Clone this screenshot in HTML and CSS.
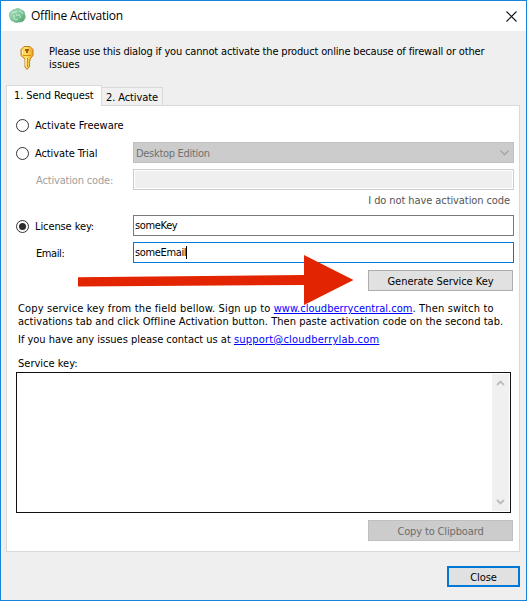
FILE: index.html
```html
<!DOCTYPE html>
<html lang="en">
<head>
<meta charset="utf-8">
<title>Offline Activation</title>
<link rel="stylesheet" href="styles.css">
</head>
<body>
<div class="window">
  <header class="titlebar">
    <svg class="app-icon" width="17" height="16" viewBox="0 0 17 16">
      <defs><linearGradient id="g" x1="0" y1="0" x2="1" y2="1"><stop offset="0" stop-color="#b5e4c5"/><stop offset=".55" stop-color="#7cc596"/><stop offset="1" stop-color="#4b9b68"/></linearGradient></defs>
      <path d="M3 3C4 1 6 2 7 1c2-1 4 0 5 1 2 0 4 2 3.500 4C17 8 16 11 15 12c-1 2-3 2-5 2-3 1-5 0-6-1-2 0-3-2-3-4C0 7 0 4 3 3z" fill="url(#g)" stroke="#6fb487" stroke-width=".7"/>
      <path d="M3 5.500C5 3 7 5 8 3.500M10 3c2 0 3 1 3.500 3M5 7v3c0 2 3 2 4 1M7 7h2c2 0 3 1 2 3" fill="none" stroke="#d2f0dc" stroke-width=".9"/>
    </svg>
    <h1 class="title">Offline Activation</h1>
    <svg class="close-icon" width="11" height="11" viewBox="0 0 11 11"><path d="M.5.500l10 10M10.500.500l-10 10" stroke="#111" stroke-width="1.100"/></svg>
  </header>
  <div class="intro">
    <svg class="key-icon" width="16" height="26" viewBox="0 0 16 26">
      <defs><linearGradient id="k" x1="0" y1="0" x2="1" y2="0"><stop offset="0" stop-color="#ffc928"/><stop offset=".4" stop-color="#ffe36a"/><stop offset="1" stop-color="#eea51c"/></linearGradient></defs>
      <path d="M5 1.500h6l3 3v6l-3 3.500v2l-1 1 1 2-1 1 1 1-3 3.500-2-2.500v-8L2 10.500v-6z" fill="url(#k)" stroke="#c27b1c" stroke-width="1"/>
      <path d="M6 5h4M7 7h2" stroke="#a85b12" stroke-width="2"/>
      <path d="M8.500 13v9M4 10.500h8" stroke="#d78c13" stroke-width="1"/>
      <path d="M3.500 5v4M7 14v7" stroke="#fff6bd" stroke-width="1"/>
    </svg>
    <p class="intro-text"><span class="intro-a">Please use this dialog if you cannot activate the product online because of firewall or other</span><br>issues</p>
  </div>
  <nav class="tabs">
    <div class="tab tab-active">1. Send Request</div>
    <div class="tab tab-idle">2. Activate</div>
  </nav>
  <main class="panel">
    <div class="form">
      <label class="row row-free"><i class="radio"></i><span class="free">Activate Freeware</span></label>
      <div class="row row-trial">
        <label class="label"><i class="radio"></i><span class="trial">Activate Trial</span></label>
        <div class="field select"><span class="desktop">Desktop Edition</span><svg width="9" height="6" viewBox="0 0 9 6"><path d="M.5.700l4 4 4-4" fill="none" stroke="#9c9c9c" stroke-width="1.100"/></svg></div>
      </div>
      <div class="row row-code"><span class="label indent disabled"><span class="code">Activation code:</span></span><div class="field locked"></div></div>
      <div class="no-code"><span class="nocode">I do not have activation code</span></div>
      <div class="row row-key">
        <label class="label"><i class="radio checked"></i><span class="license">License key:</span></label>
        <div class="field"><span class="value">someKey</span></div>
      </div>
      <div class="row row-email"><span class="label indent"><span class="email">Email:</span></span><div class="field focused"><span class="value">someEmail</span><i class="caret"></i></div></div>
    </div>
    <div class="actions"><div class="button"><span class="generate">Generate Service Key</span></div></div>
    <p class="help"><span class="help-first">Copy service key from the field bellow. Sign up to <a class="site">www.cloudberrycentral.com</a>. Then switch to</span><br><span class="help-second">activations tab and click Offline Activation button. Then paste activation code on the second tab.</span></p>
    <p class="help contact"><span class="help-contact">If you have any issues please contact us at <a class="mail">support@cloudberrylab.com</a></span></p>
    <div class="service-label"><span class="service">Service key:</span></div>
    <div class="textarea">
      <div class="scrollbar">
        <svg width="9" height="6" viewBox="0 0 9 6"><path d="M1 5l3.500-3.500L8 5" fill="none" stroke="#bcbcbc" stroke-width="1.800"/></svg>
        <svg width="9" height="6" viewBox="0 0 9 6"><path d="M1 1l3.500 3.500L8 1" fill="none" stroke="#bcbcbc" stroke-width="1.800"/></svg>
      </div>
    </div>
    <div class="actions copy-row"><div class="button button-off"><span class="copy">Copy to Clipboard</span></div></div>
  </main>
  <footer class="footer"><div class="button button-default"><span class="close">Close</span></div></footer>
  <svg class="arrow" width="276" height="52" viewBox="0 0 276 52"><path d="M0 22.200L226 20V0l49.500 25L226 50V30L0 31.500z" fill="#e32400"/></svg>
</div>
</body>
</html>
```
FILE: styles.css
```css
* { box-sizing: border-box; }
body { margin: 0; font: 11px/13px "DejaVu Sans Condensed", "DejaVu Sans", sans-serif; color: #000; }
h1, p { margin: 0; font-weight: normal; }
svg { flex: none; }
.window { position: relative; width: 527px; height: 601px; border: 1px solid #1883d7; background: #efefef; display: flex; flex-direction: column; white-space: nowrap; }
.titlebar { height: 30px; background: #fff; display: flex; align-items: center; padding: 0 9px 0 8px; }
.title { flex: 1; font: 12px/16px "Open Sans", "Noto Sans", sans-serif; margin-left: 5px; letter-spacing: -.22px; }
.intro { height: 54px; display: flex; padding: 14px 0 0 18px; }
.intro-text { margin-left: 14px; }
.intro-a { letter-spacing: -.17px; }
.tabs { height: 20px; display: flex; align-items: flex-end; padding-left: 5px; position: relative; }
.tab { border: 1px solid #d9d9d9; border-bottom: 0; }
.tab-active { width: 96px; height: 21px; margin-bottom: -1px; background: #fff; padding: 3px 0 0 7px; z-index: 1; letter-spacing: -.08px; }
.tab-idle { width: 61px; height: 18px; background: #f0f0f0; padding: 3px 0 0 4px; border-left: 0; letter-spacing: -.1px; }
.panel { width: 514px; height: 447px; margin-left: 5px; border: 1px solid #d9d9d9; background: #fff; padding: 12px 0 0 9px; }
.row { display: flex; align-items: center; }
.row-free { height: 14px; }
.row-trial { height: 21px; margin-top: 10px; }
.row-code { height: 21px; margin-top: 6px; }
.no-code { height: 25px; padding: 4px 9px 0 0; text-align: right; color: #555; }
.row-key { height: 21px; }
.row-email { height: 21px; margin-top: 6px; }
.label { width: 117px; display: flex; align-items: center; padding-top: 1px; }
.indent { padding-left: 20px; }
.disabled { color: #a0a0a0; }
.radio { width: 13px; height: 13px; border: 1px solid #333; border-radius: 50%; background: #fff; margin-right: 6px; display: grid; place-items: center; }
.checked::after { content: ""; width: 7px; height: 7px; border-radius: 50%; background: #2b2b2b; }
.field { width: 381px; height: 21px; border: 1px solid #7a7a7a; display: flex; align-items: center; padding: 0 1px; }
.select { background: #ccc; border-color: #bfbfbf; color: #707070; padding: 1px 4px 0 2px; justify-content: space-between; }
.locked { border-color: #ccc; background: #efefef; box-shadow: inset 0 0 0 1px #fff; }
.focused { border-color: #0078d7; padding-bottom: 1px; }
.caret { width: 1px; height: 13px; background: #000; }
.nocode { letter-spacing: -.09px; }
.value { letter-spacing: -.35px; }
.desktop { letter-spacing: -.3px; }
.code { letter-spacing: -.17px; }
.email { letter-spacing: -.4px; }
.license { letter-spacing: -.1px; }
.trial { letter-spacing: -.1px; }
.generate { letter-spacing: -.05px; }
.copy { letter-spacing: -.14px; }
.close { letter-spacing: -.1px; }
.help-first { letter-spacing: .15px; }
.site { letter-spacing: .02px; }
.help-second { letter-spacing: .04px; }
.help-contact { letter-spacing: -.02px; }
.mail { letter-spacing: .21px; }
.actions { display: flex; justify-content: flex-end; padding-right: 6px; margin-top: 7px; }
.button { width: 145px; height: 21px; background: #e1e1e1; border: 1px solid #adadad; display: flex; align-items: center; justify-content: center; padding-top: 1px; }
.button-off { background: #ccc; border-color: #bfbfbf; color: #6d6d6d; }
.help { margin: 11px 0 0 2px; }
.help a { color: #00f; text-decoration: underline; }
.contact { margin-top: 5px; }
.service-label { margin: 11px 0 0 2px; }
.textarea { width: 495px; height: 141px; border: 1px solid #111; margin-top: 2px; padding: 1px; display: flex; justify-content: flex-end; }
.scrollbar { width: 17px; background: #f0f0f0; display: flex; flex-direction: column; justify-content: space-between; align-items: center; padding: 6px 0; }
.footer { display: flex; justify-content: flex-end; padding: 14px 6px 0 0; }
.button-default { width: 73px; border: 2px solid #0078d7; }
.arrow { position: absolute; left: 77px; top: 254px; }
```
